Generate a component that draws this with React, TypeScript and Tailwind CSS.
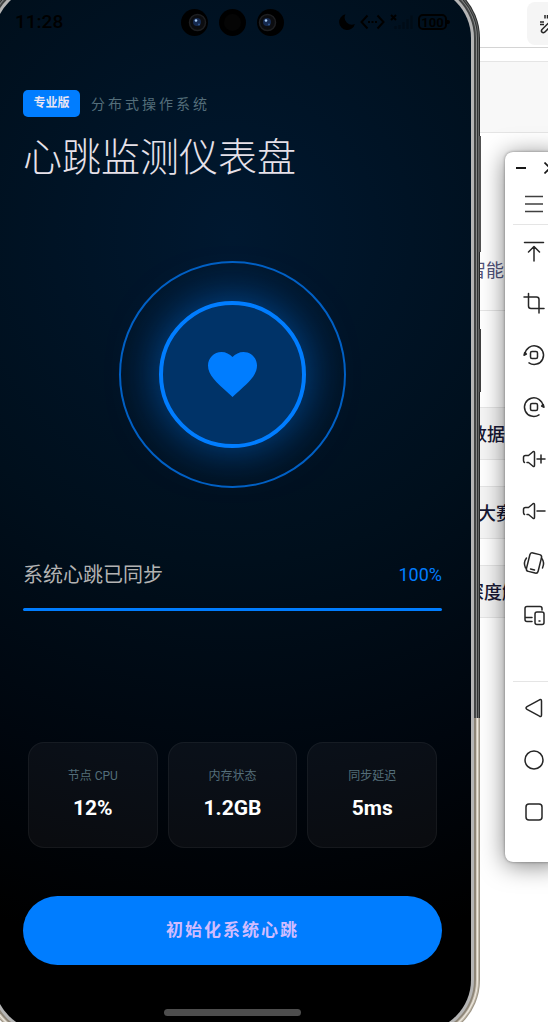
import type { ReactNode } from 'react'

const METRICS = [
  { label: '节点 CPU', value: '12%' },
  { label: '内存状态', value: '1.2GB' },
  { label: '同步延迟', value: '5ms' },
]

const ARTICLES = [
  { title: '数据', indent: 'pl-[21px]' },
  { title: '大赛', indent: 'pl-[30px]' },
  { title: '深度解', indent: 'pl-[18px]' },
]

interface ToolAction {
  name: string
  icon: ReactNode
}

const DEVICE_ACTIONS: ToolAction[] = [
  {
    name: '置顶',
    icon: <path d="M2.5 3.5h19M12 22V8M6.5 13 12 7.5l5.5 5.5" />,
  },
  {
    name: '截屏',
    icon: <path d="M6.5 2.5V15q0 2.500 2.500 2.500h13M2 6h12.500Q17 6 17 8.500V22" />,
  },
  {
    name: '向左旋转',
    icon: (
      <>
        <path d="M3 11a9.300 9.300 0 1 1 4 8.800" />
        <path d="m2 12.200.7-2.600 1.700 1.500z" fill="currentColor" />
        <rect x="8.500" y="8.500" width="7" height="7" rx="1.500" />
      </>
    ),
  },
  {
    name: '向右旋转',
    icon: (
      <>
        <path d="M21 11a9.300 9.300 0 1 0-4 8.800" />
        <path d="m22 12.200-.7-2.600-1.700 1.500z" fill="currentColor" />
        <rect x="8.500" y="8.500" width="7" height="7" rx="1.500" />
      </>
    ),
  },
  {
    name: '增大音量',
    icon: <path d="M2.500 15.500q-1-.5-1-2v-3q0-2 2-2h3l4.500-3.800q1.500-.9 1.500 1v12.600q0 1.900-1.500 1L6.500 15.500H5M15 12h8M19 8v8" />,
  },
  {
    name: '减小音量',
    icon: <path d="M2.500 15.500q-1-.5-1-2v-3q0-2 2-2h3l4.500-3.800q1.500-.9 1.500 1v12.600q0 1.900-1.500 1L6.500 15.500H5M15 12h8" />,
  },
  {
    name: '摇一摇',
    icon: (
      <>
        <rect x="6" y="2.500" width="12" height="19" rx="2.500" transform="rotate(14 12 12)" />
        <path d="M8.500 18l4 1M4.500 7q-3.500 4.500-1 10M19.500 7q3.500 4.500 1 10" />
      </>
    ),
  },
  {
    name: '多设备',
    icon: (
      <>
        <path d="M20 7V5.500Q20 3.500 18 3.500H5Q3 3.500 3 5.500v11q0 2 2 2h5M3 14.500h7" />
        <rect x="13" y="9" width="9" height="12.500" rx="2" />
        <path d="M17 18h1" />
      </>
    ),
  },
]

const NAV_ACTIONS: ToolAction[] = [
  {
    name: '返回',
    icon: <path d="M5 10.600 17.500 3.800q2-.9 2 1.200v14q0 2.100-2 1.200L5 13.400q-2-1.400 0-2.800z" />,
  },
  { name: '主屏幕', icon: <circle cx="12" cy="12" r="9" /> },
  { name: '最近任务', icon: <rect x="4" y="4" width="16" height="16" rx="3" /> },
]

function ToolButton({ name, icon }: ToolAction) {
  return (
    <button type="button" aria-label={name} className="flex h-[52px] w-full items-center justify-center text-neutral-800">
      <svg
        viewBox="0 0 24 24"
        className="size-6"
        fill="none"
        stroke="currentColor"
        strokeWidth="1.5"
        strokeLinecap="round"
        strokeLinejoin="round"
      >
        {icon}
      </svg>
    </button>
  )
}

function EmulatorToolbar() {
  return (
    <aside className="absolute -right-[15px] top-[152px] z-20 w-[58px] rounded-lg bg-white pb-6 shadow-[0_3px_24px_rgba(0,0,0,0.5),0_0_3px_rgba(0,0,0,0.4)]">
      <div className="flex h-8 items-center justify-between pl-[11px] pr-[7px] text-neutral-900">
        <button type="button" aria-label="最小化">
          <svg viewBox="0 0 10 10" className="size-[10px]" stroke="currentColor" strokeWidth="2">
            <path d="M0 5h10" />
          </svg>
        </button>
        <button type="button" aria-label="关闭">
          <svg viewBox="0 0 12 12" className="size-3" stroke="currentColor" strokeWidth="1.6">
            <path d="M.5.5l11 11M11.500.5l-11 11" />
          </svg>
        </button>
      </div>
      <button type="button" aria-label="菜单" className="flex h-10 w-full items-center justify-center text-neutral-700">
        <svg viewBox="0 0 18 18" className="size-[18px]" stroke="currentColor" strokeWidth="1.700">
          <path d="M0 1.500h18M0 9h18M0 16.500h18" />
        </svg>
      </button>
      <hr className="ml-2 border-neutral-200" />
      {DEVICE_ACTIONS.map((action) => (
        <ToolButton key={action.name} {...action} />
      ))}
      <hr className="ml-2 mt-10 border-neutral-200" />
      {NAV_ACTIONS.map((action) => (
        <ToolButton key={action.name} {...action} />
      ))}
    </aside>
  )
}

function BrowserPage() {
  return (
    <div className="-ml-8 w-[100px] shrink-0 overflow-hidden whitespace-nowrap bg-white font-['Noto_Sans','Noto_Sans_CJK_SC',sans-serif]">
      <div className="flex h-12 justify-end border-b border-neutral-300 pt-[2px]">
        <button
          type="button"
          aria-label="智能工具"
          className="-mr-[22px] flex h-[43px] w-[43px] items-center justify-center rounded-lg bg-neutral-100 text-neutral-800"
        >
          <svg viewBox="0 0 20 20" className="size-5" fill="none" stroke="currentColor" strokeWidth="1.500">
            <path d="M3 15.500 12 6.500q1.500-1.200 2.700 0t0 2.700l-9 9q-1.500 1-2.700 0t0-2.700z" />
            <path d="M6 1v3.500M8.500 1v3.500M1 8h4M1 10.500h4" />
          </svg>
        </button>
      </div>
      <div className="h-[14px] border-b border-neutral-200" />
      <div className="h-[71px] border-b border-neutral-200 bg-[#f8f8f8]" />
      <div className="flex h-[178px] items-end border-b border-neutral-200 pb-[26px] pl-[20px] text-lg leading-7 text-[#50527a]">
        智能...
      </div>
      <ul className="mt-[96px] flex flex-col gap-[26px]">
        {ARTICLES.map((article) => (
          <li
            key={article.title}
            className={`h-[53px] border-y border-neutral-200 bg-neutral-100 text-lg font-medium leading-[52px] text-[#171733] ${article.indent}`}
          >
            {article.title}
          </li>
        ))}
      </ul>
    </div>
  )
}

function CameraHole({ lens }: { lens?: 'left' | 'right' }) {
  return (
    <svg viewBox="0 0 27 27" className="size-[27px]">
      <circle cx="13.500" cy="13.500" r="13.500" fill="#000" />
      {lens ? (
        <g transform={lens === 'right' ? 'translate(3 0)' : 'translate(-3 0)'}>
          <circle cx="13.500" cy="13.500" r="8" fill="#0c0d10" stroke="#1d1e21" strokeWidth="1.500" />
          <circle cx="13" cy="13" r="4" fill="#15294f" />
          <circle cx="12" cy="11.500" r="1.300" fill="#a9cdf5" />
          <circle cx="15" cy="15.500" r="1" fill="#31588f" />
        </g>
      ) : (
        <circle cx="13.500" cy="13.500" r="8.500" fill="#050505" />
      )}
    </svg>
  )
}

function StatusBar() {
  return (
    <div className="grid h-[57px] grid-cols-[1fr_auto_1fr] items-center px-[21px] pt-[13px] text-black">
      <span className="font-['Roboto',sans-serif] text-[19px] font-medium">11:28</span>
      <div className="flex gap-[11px]">
        <CameraHole lens="right" />
        <CameraHole />
        <CameraHole lens="left" />
      </div>
      <div className="flex items-center justify-end gap-[5px]">
        <svg viewBox="0 0 16 16" className="size-4" fill="currentColor">
          <path d="M6.500.2A8 8 0 1 0 15.900 10 7.200 7.200 0 0 1 6.500.2z" />
        </svg>
        <svg viewBox="0 0 25 16" className="h-4 w-[25px]" fill="none" stroke="currentColor" strokeWidth="2">
          <path d="M7.500 1.500 1.500 8l6 6.500M17.500 1.500l6 6.500-6 6.500" />
          <path d="M8 8h2M11.500 8h2M15 8h2" />
        </svg>
        <svg viewBox="0 0 23 16" className="h-4 w-[23px]" fill="none" stroke="currentColor" strokeWidth="2">
          <path d="m1 1 5 5M6 1 1 6" />
          <path d="M5.500 15v-3M9.500 15v-4M13.500 15V8M17.500 15V5M21.500 15V1.500" strokeOpacity="0.250" strokeWidth="2.500" />
        </svg>
        <div className="flex items-center">
          <span className="flex h-4 w-[29px] items-center justify-center rounded-[5px] border-2 border-black font-['Roboto',sans-serif] text-[13px] font-bold leading-none">
            100
          </span>
          <span className="h-1 w-[3px] rounded-r-sm bg-black" />
        </div>
      </div>
    </div>
  )
}

function HeartbeatRings() {
  return (
    <div className="mx-auto mt-[76px] flex size-[227px] items-center justify-center rounded-full border-2 border-[#0060c4]">
      <div className="flex size-[147px] items-center justify-center rounded-full border-4 border-[#007dff] bg-[#003368] shadow-[0_0_48px_rgba(0,125,255,0.55)]">
        <svg viewBox="0 0 49 45" className="h-[45px] w-[49px]" fill="#007dff">
          <path d="M24.500 45 21 41.700C8 30 0 23 0 13.500 0 6 6 0 13.500 0c4.200 0 8.300 2 11 5.100C27.200 2 31.300 0 35.500 0 43 0 49 6 49 13.500c0 9.500-8 16.500-21 28.200z" />
        </svg>
      </div>
    </div>
  )
}

function Dashboard() {
  return (
    <main className="px-[29px]">
      <header className="mt-[33px]">
        <div className="flex h-[27px] items-center gap-[11px]">
          <span className="w-[57px] rounded-[5px] bg-[#007dff] text-center text-xs font-bold leading-[27px] text-[#e8e4f2]">
            专业版
          </span>
          <span className="text-sm tracking-[3px] text-[#546e7a]">分布式操作系统</span>
        </div>
        <h1 className="mt-[14px] whitespace-nowrap text-[39px] font-light leading-[54px] text-[#e6e1e9]">心跳监测仪表盘</h1>
      </header>

      <HeartbeatRings />

      <section className="mt-[73px]">
        <div className="flex h-7 items-center justify-between">
          <span id="sync-label" className="text-xl text-[#b3b3b3]">
            系统心跳已同步
          </span>
          <span className="text-lg text-[#007dff]">100%</span>
        </div>
        <div
          role="progressbar"
          aria-labelledby="sync-label"
          aria-valuenow={100}
          className="mt-[19px] h-[3px] rounded-full bg-[#007dff]"
        />
      </section>

      <section className="mt-[131px] grid grid-cols-3 gap-[10px] px-[5px]">
        {METRICS.map((metric) => (
          <div
            key={metric.label}
            className="flex h-[106px] flex-col items-center rounded-2xl border border-white/5 bg-white/4 pt-[23px] text-center"
          >
            <span className="text-xs leading-5 text-[#546e7a]">{metric.label}</span>
            <span className="mt-2 text-[21px] font-bold leading-7 text-white">{metric.value}</span>
          </div>
        ))}
      </section>

      <button
        type="button"
        className="mt-12 h-[69px] w-full rounded-full bg-[#007dff] pt-px text-[17px] font-bold tracking-[2px] text-[#d0bcff]"
      >
        初始化系统心跳
      </button>
    </main>
  )
}

function Phone() {
  return (
    <div className="relative z-10 -mb-[18px] -ml-[15px] -mt-[22px] flex-1 rounded-[60px] bg-[linear-gradient(#292b2b_740px,#9b9384_740px)] p-px">
      <span className="absolute -right-px top-[158px] h-[116px] w-0.5 bg-neutral-600" />
      <span className="absolute -right-px top-[351px] h-[63px] w-0.5 bg-neutral-700" />
      <div className="relative h-full rounded-[59px] bg-[linear-gradient(#656767_739px,#c0b8a9_739px)] p-px">
        <div className="h-full rounded-[58px] bg-[linear-gradient(#303232_738px,#eee9df_738px)] p-px">
          <div className="h-full rounded-[57px] bg-[linear-gradient(#858787_737px,#d2cabd_737px)] p-px">
            <div className="h-full rounded-[56px] bg-[linear-gradient(#424444_736px,#8e8678_736px)] p-0.5">
              <div className="h-full rounded-[54px] bg-[#b5b5b5] p-[3px]">
                <div className="h-full overflow-hidden rounded-[51px] bg-[radial-gradient(circle_720px_at_50%_24%,#001830_0%,#000f1c_45%,#00060e_75%,#000_100%)] pb-[15px] font-['Roboto','Noto_Sans_CJK_SC',sans-serif]">
                  <StatusBar />
                  <div className="h-[13px]" />
                  <Dashboard />
                  <div className="mx-auto mt-11 h-[7px] w-[137px] rounded-full bg-[#4d4d4d]" />
                </div>
              </div>
            </div>
          </div>
        </div>
      </div>
    </div>
  )
}

export default function App() {
  return (
    <div className="relative flex min-h-screen overflow-hidden bg-white">
      <Phone />
      <BrowserPage />
      <EmulatorToolbar />
    </div>
  )
}
